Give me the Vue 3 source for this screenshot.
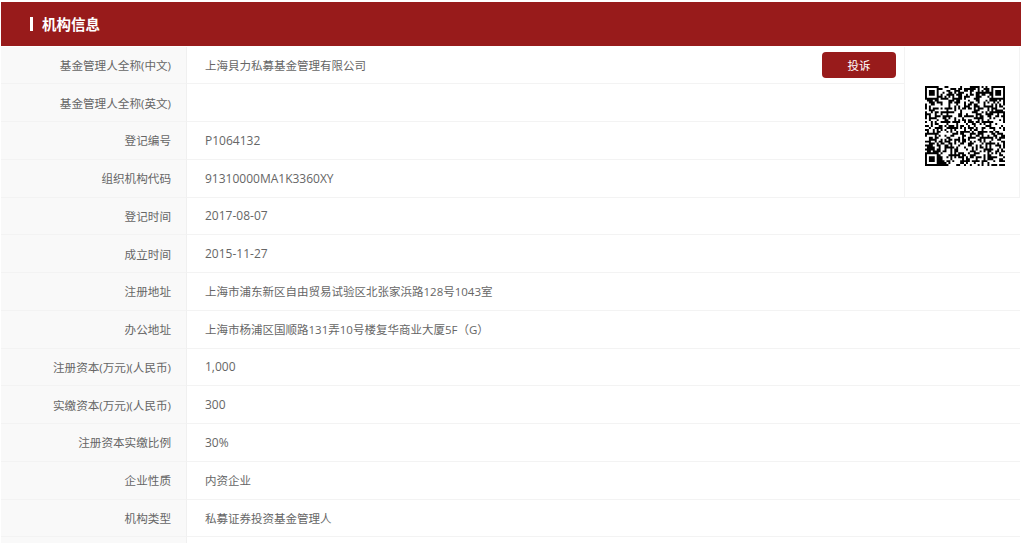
<script setup>
const rows = [
  { label: '基金管理人全称(中文)', value: '上海貝力私募基金管理有限公司', button: true },
  { label: '基金管理人全称(英文)', value: '' },
  { label: '登记编号', value: 'P1064132', latin: true },
  { label: '组织机构代码', value: '91310000MA1K3360XY', latin: true },
  { label: '登记时间', value: '2017-08-07', latin: true },
  { label: '成立时间', value: '2015-11-27', latin: true },
  { label: '注册地址', value: '上海市浦东新区自由贸易试验区北张家浜路128号1043室' },
  { label: '办公地址', value: '上海市杨浦区国顺路131弄10号楼复华商业大厦5F（G）' },
  { label: '注册资本(万元)(人民币)', value: '1,000', latin: true },
  { label: '实缴资本(万元)(人民币)', value: '300', latin: true },
  { label: '注册资本实缴比例', value: '30%', latin: true },
  { label: '企业性质', value: '内资企业' },
  { label: '机构类型', value: '私募证券投资基金管理人' },
  { label: '', value: '' },
]

const size = 41
let seed = 20170807
const rand = () => {
  seed = (seed * 1664525 + 1013904223) >>> 0
  return (seed >>> 16) / 65536
}
const inFinder = (x, y, ox, oy) => x >= ox && x < ox + 8 && y >= oy && y < oy + 8
let qrPath = ''
for (let y = 0; y < size; y++) {
  for (let x = 0; x < size; x++) {
    if (inFinder(x, y, -1, -1) || inFinder(x, y, size - 7, -1) || inFinder(x, y, -1, size - 7)) continue
    if (rand() > 0.5) qrPath += `M${x} ${y}h1v1h-1z`
  }
}
const finder = (ox, oy) =>
  `M${ox} ${oy}h7v7h-7zM${ox + 1} ${oy + 1}v5h5v-5zM${ox + 2} ${oy + 2}h3v3h-3z`
qrPath += finder(0, 0) + finder(size - 7, 0) + finder(0, size - 7)
</script>

<template>
  <div class="page">
    <header class="head"><i class="bar"></i><h2 class="title">机构信息</h2></header>
    <div class="table">
      <template v-for="(row, i) in rows" :key="i">
        <div class="label">{{ row.label }}</div>
        <div class="value" :class="{ wide: i > 3, latin: row.latin }">
          <span>{{ row.value }}</span>
          <button v-if="row.button" class="btn" type="button">投诉</button>
        </div>
      </template>
      <div class="qr">
        <svg class="qr-img" viewBox="0 0 41 41" fill-rule="evenodd">
          <path :d="qrPath" fill="#000" />
        </svg>
      </div>
    </div>
  </div>
</template>

<style scoped>
.page {
  height: 543px;
  overflow: hidden;
  box-sizing: border-box;
  padding: 2px 3px 0 1px;
  background: #fff;
  font-family: "Open Sans", "Noto Sans CJK SC", sans-serif;
  font-size: 11.5px;
  color: #666;
}
.head {
  height: 44px;
  display: flex;
  align-items: center;
  padding-left: 29px;
  background: #981b1b;
  color: #fff;
}
.bar {
  width: 3px;
  height: 14px;
  margin-right: 9px;
  background: #fff;
}
.title {
  margin: 0 0 2px;
  font-size: 14.5px;
  font-weight: 700;
}
.table {
  display: grid;
  grid-template-columns: 186px 717px 116px;
  grid-auto-rows: 37.75px;
  padding-top: 0.5px;
}
.label,
.value {
  box-sizing: border-box;
  display: flex;
  align-items: center;
  border-bottom: 1px solid #f3f3f3;
}
.label {
  grid-column: 1;
  justify-content: flex-end;
  padding-right: 15px;
  background: #f9f9f9;
  border-right: 1px solid #f0f0f0;
  font-size: 11.6px;
}
.value {
  grid-column: 2;
  justify-content: space-between;
  padding: 0 8px 0 18px;
}
.value.wide {
  grid-column: 2 / 4;
}
.value.latin {
  font-size: 12px;
}
.btn {
  width: 74px;
  height: 26px;
  padding: 0;
  border: 0;
  border-radius: 4px;
  background: #981b1b;
  color: #fff;
  font: inherit;
}
.qr {
  grid-column: 3;
  grid-row: 1 / 5;
  display: flex;
  align-items: center;
  justify-content: center;
  padding: 8px 0 0 6px;
  border-left: 1px solid #f3f3f3;
  border-right: 1px solid #f3f3f3;
  border-bottom: 1px solid #f3f3f3;
}
.qr-img {
  width: 80px;
  height: 80px;
}
</style>
